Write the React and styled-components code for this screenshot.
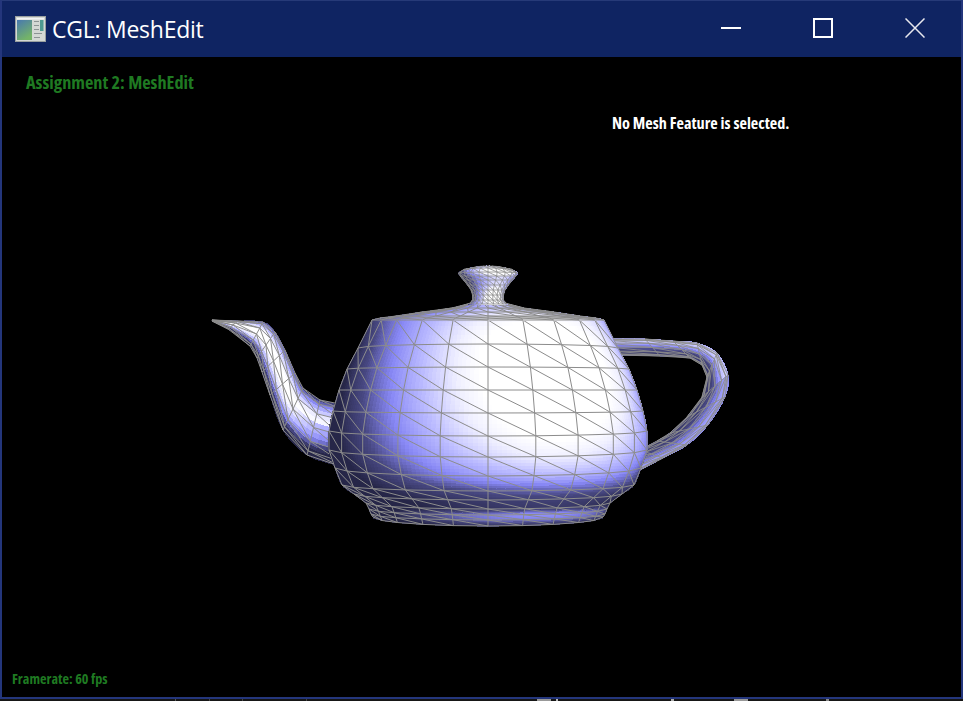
import React from 'react';
import styled, { createGlobalStyle } from 'styled-components';

const GlobalStyle = createGlobalStyle`
  html, body { margin: 0; padding: 0; background: #161616; overflow: hidden; }
  #root { width: 963px; height: 701px; }
`;

const Page = styled.div`
  width: 963px;
  height: 701px;
  display: flex;
  flex-direction: column;
`;

const Window = styled.div`
  box-sizing: border-box;
  height: 699px;
  display: flex;
  flex-direction: column;
  border: 2px solid #24367c;
  border-top: 1px solid #263a78;
`;

const TitleBar = styled.div`
  height: 56px;
  flex: none;
  display: flex;
  align-items: center;
  background: #0f2462;
  color: #fff;
`;

const AppIcon = styled.svg`
  width: 32px;
  height: 26px;
  margin: -1px 5px 0 13px;
  flex: none;
`;

const Title = styled.div`
  flex: 1;
  font: 400 23px "Open Sans", "Noto Sans", sans-serif;
  letter-spacing: -0.25px;
`;

const WinButton = styled.div`
  width: 92px;
  height: 56px;
  flex: none;
  display: flex;
  align-items: center;
  justify-content: center;
  svg { width: 20px; height: 20px; margin-top: -2px; margin-left: -1px; }
`;

const Viewport = styled.div`
  position: relative;
  flex: 1;
  background: #000;
  display: flex;
  flex-direction: column;
  padding: 13px 0 9px 0;
  font-family: "Open Sans", "Noto Sans", sans-serif;
  font-stretch: 75%;
  font-weight: 700;
`;

const Heading = styled.div`
  position: relative;
  margin-left: 24px;
  color: #1f7a22;
  font-size: 18.3px;
  line-height: 24px;
`;

const SelectionInfo = styled.div`
  position: relative;
  margin: 19px 0 0 610px;
  color: #fff;
  font-size: 16.2px;
  line-height: 20px;
`;

const Framerate = styled.div`
  position: relative;
  margin: auto 0 0 10px;
  color: #1f7a22;
  font-size: 14.2px;
  line-height: 18px;
`;

const Scene = styled.svg`
  position: absolute;
  left: -2px;
  top: -57px;
  width: 963px;
  height: 701px;
`;

const DesktopEdge = styled.svg`
  display: block;
  width: 963px;
  height: 2px;
`;

// ---- mesh helpers ----

const lerp = (a, b, t) => a + (b - a) * t;
const rad = (d) => (d * Math.PI) / 180;

// value at a fractional index of a plain table, smooth
const sample = (arr, i) => {
  const n = arr.length - 1;
  const k = Math.max(0, Math.min(n - 1e-6, i));
  const j = Math.floor(k);
  const t = k - j;
  const p0 = arr[Math.max(0, j - 1)];
  const p1 = arr[j];
  const p2 = arr[j + 1];
  const p3 = arr[Math.min(n, j + 2)];
  return 0.5 * (2 * p1 + (p2 - p0) * t + (2 * p0 - 5 * p1 + 4 * p2 - p3) * t * t + (3 * p1 - p0 - 3 * p2 + p3) * t * t * t);
};

const linear = (arr, i) => {
  const k = Math.max(0, Math.min(arr.length - 1 - 1e-6, i));
  const j = Math.floor(k);
  return lerp(arr[j], arr[j + 1], k - j);
};

const STOPS = [
  [0, [38, 38, 72]],
  [0.3, [72, 72, 130]],
  [0.55, [136, 136, 245]],
  [0.75, [186, 186, 255]],
  [0.92, [240, 240, 255]],
  [1, [255, 255, 255]],
];

const ramp = (t) => {
  const v = Math.max(0, Math.min(1, t));
  for (let i = 1; i < STOPS.length; i++) {
    if (v <= STOPS[i][0]) {
      const [a, ca] = STOPS[i - 1];
      const [b, cb] = STOPS[i];
      const f = (v - a) / (b - a);
      return `rgb(${ca.map((c, k) => Math.round(lerp(c, cb[k], f))).join(',')})`;
    }
  }
  return '#fff';
};

// one meshed patch: smooth facets underneath, gray wire on top
const Patch = ({ cols, rows, point, shade, stepU = 5, stepV = 4, wire = 1 }) => {
  const facets = [];
  for (let u = 0; u < (cols - 1) * stepU; u++) {
    for (let v = 0; v < (rows - 1) * stepV; v++) {
      const a = u / stepU;
      const b = (u + 1) / stepU;
      const c = v / stepV;
      const d = (v + 1) / stepV;
      const pts = [point(a, c), point(b, c), point(b, d), point(a, d)]
        .map((p) => p.map((n) => n.toFixed(1)).join(','))
        .join(' ');
      const col = ramp(shade((a + b) / 2, (c + d) / 2));
      facets.push(<polygon key={`${u}-${v}`} points={pts} fill={col} stroke={col} strokeWidth="1" />);
    }
  }
  let d = '';
  const seg = (p, q) => {
    d += `M${p[0].toFixed(1)} ${p[1].toFixed(1)}L${q[0].toFixed(1)} ${q[1].toFixed(1)}`;
  };
  for (let i = 0; i < cols; i++) {
    for (let j = 0; j < rows; j++) {
      if (i < cols - 1) seg(point(i, j), point(i + 1, j));
      if (j < rows - 1) seg(point(i, j), point(i, j + 1));
      if (i < cols - 1 && j < rows - 1) seg(point(i, j), point(i + 1, j + 1));
    }
  }
  return (
    <g>
      <g shapeRendering="crispEdges">{facets}</g>
      <path d={d} fill="none" stroke="#8c8c8c" strokeWidth={wire} />
    </g>
  );
};

// ---- surfaces of revolution (body, lid, knob) ----

const CX = 488;
const LIGHT = [0.42, 0.33, 0.84];

const revolve = (thetas, table) => ({
  cols: thetas.length,
  rows: table.length,
  point: (u, v) => {
    const th = rad(linear(thetas, u));
    const hw = sample(table.map((r) => r[1]), v);
    const y = sample(table.map((r) => r[0]), v);
    const bow = sample(table.map((r) => r[2]), v);
    return [CX + hw * Math.sin(th), y + bow * (1 - Math.cos(th))];
  },
  shade: (u, v) => {
    const th = rad(linear(thetas, u));
    const ph = rad(linear(table.map((r) => r[3]), v));
    const n = [Math.sin(th) * Math.cos(ph), Math.sin(ph), Math.cos(th) * Math.cos(ph)];
    return n[0] * LIGHT[0] + n[1] * LIGHT[1] + n[2] * LIGHT[2] + 0.12;
  },
});

const side = [90, 67, 52, 34.5, 17.5];
const BODY_THETAS = [...side.map((a) => -a), 0, ...side.slice().reverse()];

// y at the axis, half width, bow towards the silhouette, surface tilt
const BODY = revolve(BODY_THETAS, [
  [320, 116, 0, 50],
  [344, 130, 4, 30],
  [367, 141, 2, 20],
  [390, 149, 0, 12],
  [413, 155, -2, 4],
  [436, 159, -5, -6],
  [457, 159, -7, -17],
  [476, 153, -8, -32],
  [491, 146, -6, -54],
  [500, 134, -6, -64],
  [509, 122, -6, -68],
  [515, 119, -6, -42],
  [520, 117, -6, -46],
  [526, 115, -9, -70],
]);

const LID = revolve(BODY_THETAS, [
  [303, 17, 0, 72],
  [308, 36, 0, 66],
  [312, 66, 0, 60],
  [316, 92, 0, 52],
  [318, 108, 0, 44],
  [320, 116, 0, 50],
]);

const KNOB_THETAS = [-90, -72, -54, -36, -18, 0, 18, 36, 54, 72, 90];
const KNOB = revolve(KNOB_THETAS, [
  [266, 14, 2, 72],
  [268, 25, 2, 50],
  [272, 29.5, 1, 15],
  [276, 28, 0, -20],
  [280, 24.5, 0, -24],
  [285, 20.5, 0, -22],
  [290, 17, 0, -10],
  [295, 15.5, 0, 4],
  [300, 15.5, 0, 25],
  [304, 19, 0, 50],
]);

// ---- tubes (spout, handle) ----

const tube = (alphas, upper, lower, shade) => {
  const ux = upper.map((p) => p[0]);
  const uy = upper.map((p) => p[1]);
  const lx = lower.map((p) => p[0]);
  const ly = lower.map((p) => p[1]);
  return {
    cols: alphas.length,
    rows: upper.length,
    point: (u, v) => {
      const s = Math.sin(rad(linear(alphas, u)));
      const ax = sample(ux, v);
      const ay = sample(uy, v);
      const bx = sample(lx, v);
      const by = sample(ly, v);
      return [(ax + bx) / 2 + ((bx - ax) / 2) * s, (ay + by) / 2 + ((by - ay) / 2) * s];
    },
    shade: (u, v) => shade(linear(alphas, u), v),
  };
};

const TUBE_ALPHAS = [-90, -58, -30, 0, 30, 58, 90];

const SPOUT = tube(
  TUBE_ALPHAS,
  [[212, 320], [238, 321], [263, 322], [275, 332], [285, 350], [295, 373], [303, 388], [320, 400], [340, 404]],
  [[212, 321], [228, 329], [250, 346], [257, 358], [262, 372], [270, 395], [283, 430], [307, 455], [340, 466]],
  (a, v) => {
    const c = Math.cos(rad(a + 8));
    const fade = v > 5.5 ? (v - 5.5) * 0.17 : 0;
    return 0.18 + 0.85 * c * c - (a > 30 ? (a - 30) * 0.006 : 0) - fade * (a > -10 ? 1 : 0.2);
  },
);

const HANDLE = tube(
  TUBE_ALPHAS,
  [[605, 339], [645, 339], [673, 341], [697, 343], [717, 353], [728, 375], [725, 397], [708, 425], [687, 445], [663, 458], [640, 470]],
  [[612, 355], [660, 356], [690, 358], [702, 365], [707, 377], [702, 397], [687, 417], [670, 433], [657, 441], [640, 450]],
  (a, v) => {
    const peak = Math.cos(rad(a + 50));
    const rear = v > 5 ? 0.42 : 0.6;
    return 0.22 + rear * peak * peak - (a > 40 ? (a - 40) * 0.005 : 0);
  },
);

const Teapot = () => (
  <Scene viewBox="0 0 963 701">
    <Patch {...HANDLE} stepU={3} stepV={4} wire={0.9} />
    <Patch {...SPOUT} stepU={3} stepV={4} />
    <Patch {...BODY} stepU={10} stepV={6} />
    <Patch {...LID} stepU={10} stepV={2} />
    <Patch {...KNOB} stepU={2} stepV={2} wire={0.8} />
  </Scene>
);

const WindowGlyph = () => (
  <AppIcon viewBox="0 0 32 26">
    <defs>
      <linearGradient id="panel" x1="0" y1="0" x2="0.5" y2="1">
        <stop offset="0" stopColor="#4878b0" />
        <stop offset="1" stopColor="#74b468" />
      </linearGradient>
    </defs>
    <rect x="0.5" y="0.5" width="30" height="25" fill="#d4d8d4" stroke="#9aa0a0" />
    <rect x="2" y="4" width="15" height="20" fill="url(#panel)" />
    <rect x="2" y="2" width="27" height="1.5" fill="#f2f4f4" />
    <rect x="25" y="4" width="3.5" height="11" fill="#4f9a90" />
    <rect x="19" y="5" width="5" height="1" fill="#8c9494" />
    <rect x="19" y="9" width="5" height="1" fill="#8c9494" />
    <rect x="19" y="13" width="5" height="1" fill="#8c9494" />
    <rect x="19" y="17" width="8" height="1" fill="#8c9494" />
    <rect x="19" y="21" width="6" height="1" fill="#8c9494" />
  </AppIcon>
);

const edgeMarks = [[175, 1, '#555'], [209, 1, '#444'], [242, 1, '#444'], [306, 1, '#444'], [537, 14, '#999'], [556, 2, '#bbb'], [671, 3, '#aaa'], [734, 14, '#999'], [826, 3, '#888']];

export default function App() {
  return (
    <Page>
      <GlobalStyle />
      <Window>
        <TitleBar>
          <WindowGlyph />
          <Title>CGL: MeshEdit</Title>
          <WinButton>
            <svg viewBox="0 0 20 20"><rect y="9" width="20" height="2" fill="#fff" /></svg>
          </WinButton>
          <WinButton>
            <svg viewBox="0 0 20 20"><rect x="1" y="1" width="18" height="18" fill="none" stroke="#fff" strokeWidth="2" /></svg>
          </WinButton>
          <WinButton>
            <svg viewBox="0 0 20 20"><path d="M0.5 0.5L19.5 19.5M19.5 0.5L0.5 19.5" stroke="#e8e8ee" strokeWidth="1.5" fill="none" /></svg>
          </WinButton>
        </TitleBar>
        <Viewport>
          <Teapot />
          <Heading>Assignment 2: MeshEdit</Heading>
          <SelectionInfo>No Mesh Feature is selected.</SelectionInfo>
          <Framerate>Framerate: 60 fps</Framerate>
        </Viewport>
      </Window>
      <DesktopEdge viewBox="0 0 963 2">
        {edgeMarks.map(([x, w, c]) => <rect key={x} x={x} y="0" width={w} height="2" fill={c} />)}
      </DesktopEdge>
    </Page>
  );
}
